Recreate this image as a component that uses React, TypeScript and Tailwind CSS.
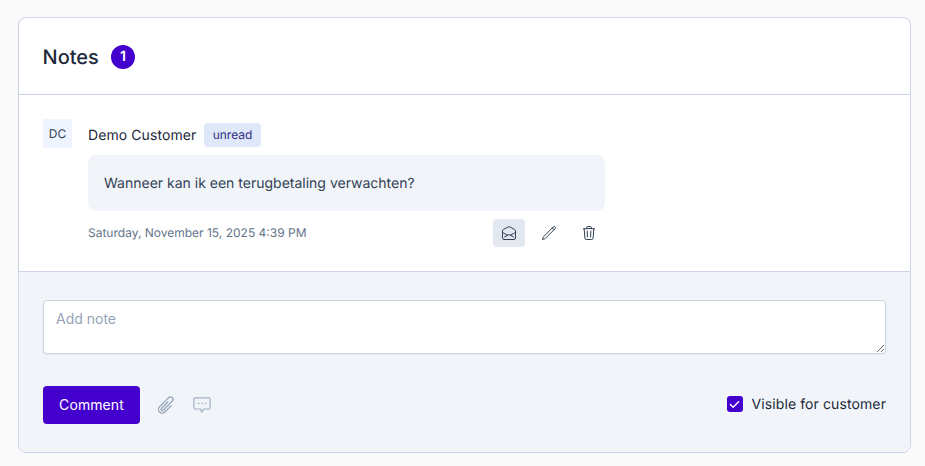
import { HiOutlineEnvelopeOpen, HiOutlinePaperClip, HiOutlinePencil, HiOutlineTrash } from 'react-icons/hi2'
import { FaCheck } from 'react-icons/fa6'

export default function App() {
  return (
    <div className="min-h-[466px] bg-[#fafafa] pt-[17px] pl-[18px] font-['Inter',sans-serif] [text-rendering:geometricPrecision]">
      {/* Notes card */}
      <div className="w-[893px] h-[436px] flex flex-col border border-[#cbd5e6] rounded-lg bg-white overflow-hidden">
        {/* Header */}
        <div className="h-[77px] shrink-0 flex items-center gap-3 pl-[23.5px] pr-6 pt-0.5 border-b border-[#cbd5e6]">
          <h2 className="text-[20px] leading-7 font-medium text-[#1e293b]">Notes</h2>
          <span className="w-6 h-6 rounded-full bg-[#4400cc] text-white text-sm font-semibold flex items-center justify-center">
            1
          </span>
        </div>

        {/* Note */}
        <div className="h-[177px] shrink-0 flex gap-4 px-6 pt-6 border-b border-[#cbd5e6]">
          <div className="w-[29px] h-[29px] shrink-0 bg-[#eff4ff] text-[#334155] text-xs flex items-center justify-center">
            DC
          </div>
          <div className="w-[517px] pt-1">
            <div className="flex items-center gap-2 h-6">
              <span className="w-[108px] pt-0.5 text-sm tracking-[0.08px] whitespace-nowrap text-[#1e293b]">Demo Customer</span>
              <span className="h-6 w-[57px] justify-center rounded bg-[#dfe8fb] text-[#312e81] text-xs flex items-center">
                unread
              </span>
            </div>
            <div className="mt-2 h-14 rounded-lg bg-[#f1f5f9] px-4 pt-0.5 flex items-center text-sm text-[#334155]">
              Wanneer kan ik een terugbetaling verwachten?
            </div>
            <div className="mt-2 h-7 flex items-center justify-between">
              <span className="text-xs text-[#64748b]">Saturday, November 15, 2025 4:39 PM</span>
              <div className="flex items-center gap-2 text-[#334155]">
                <button className="w-8 h-7 rounded bg-[#e2e7f0] flex items-center justify-center">
                  <HiOutlineEnvelopeOpen className="w-4 h-4" />
                </button>
                <button className="w-8 h-7 rounded flex items-center justify-center">
                  <HiOutlinePencil className="w-4 h-4" />
                </button>
                <button className="w-8 h-7 rounded flex items-center justify-center">
                  <HiOutlineTrash className="w-4 h-4" />
                </button>
              </div>
            </div>
          </div>
        </div>

        {/* Add note */}
        <div className="flex-1 bg-[#f1f5f9] px-6 pt-7">
          <textarea
            placeholder="Add note"
            className="block w-full h-[54px] rounded border border-[#cbd5e1] bg-white px-3 py-2 text-sm text-[#334155] placeholder:text-[#94a3b8] shadow-xs outline-none"
          />
          <div className="mt-8 flex items-center justify-between">
            <div className="flex items-center gap-4">
              <button className="w-[97px] h-[38px] rounded bg-[#4400cc] text-white text-sm tracking-[0.1px]">
                Comment
              </button>
              <HiOutlinePaperClip className="w-5 h-5 text-[#94a3b8]" />
              <svg viewBox="0 0 20 20" fill="none" stroke="currentColor" strokeWidth="1.2" strokeLinejoin="round" className="w-5 h-5 text-[#a3b0c4]">
                <path d="M3.5 2.8h13a1.6 1.6 0 0 1 1.6 1.6v8a1.6 1.6 0 0 1-1.6 1.6h-4.3l-2.7 3-.7-3H3.5a1.6 1.6 0 0 1-1.6-1.6v-8a1.6 1.6 0 0 1 1.6-1.6z" />
                <path d="M6.5 8.4h.01M10 8.4h.01M13.5 8.4h.01" strokeLinecap="round" strokeWidth="1.6" />
              </svg>
            </div>
            <label className="flex items-center gap-[9px] text-sm tracking-[0.1px] text-[#1e293b]">
              <span className="w-4 h-4 -mt-0.5 rounded-[3px] bg-[#4400cc] text-white flex items-center justify-center">
                <FaCheck className="w-[11px] h-[11px]" />
              </span>
              Visible for customer
            </label>
          </div>
        </div>
      </div>
    </div>
  )
}
